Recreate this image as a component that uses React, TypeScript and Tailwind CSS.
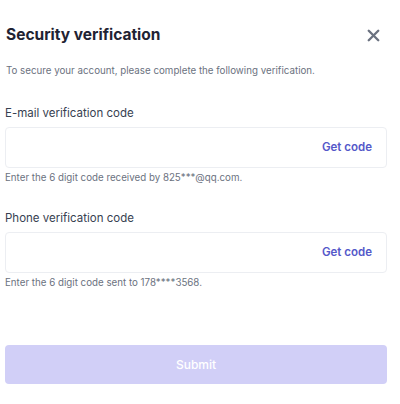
import { X } from 'lucide-react';

interface CodeFieldProps {
  label: string;
  hint: string;
}

function CodeField({ label, hint }: CodeFieldProps) {
  return (
    <div>
      <label className="block text-[11.5px] leading-4 text-[#374151] h-4">{label}</label>
      <div className="mt-[6px] h-[41px] rounded-[4px] border border-[#eceef2] flex items-center justify-end pr-[14px]">
        <button className="text-[11.5px] font-semibold text-[#5458c9]">Get code</button>
      </div>
      <p className="mt-[3px] text-[9.75px] leading-[14px] text-[#6b7280]">{hint}</p>
    </div>
  );
}

export default function App() {
  return (
    <div className="w-[400px] h-[404px] bg-white pl-[5px] pt-[23px] font-['Inter',sans-serif]">
      <div className="w-[382px]">
        <div className="flex items-center justify-between pl-[1px]">
          <h2 className="text-[15.5px] leading-6 font-bold text-[#1f2333]">Security verification</h2>
          <button className="mr-[4px] text-[#6b7280]">
            <X className="h-[19px] w-[19px]" strokeWidth={3} />
          </button>
        </div>
        <p className="mt-[17px] pl-[1px] text-[9.75px] leading-[14px] text-[#6b7280]">
          To secure your account, please complete the following verification.
        </p>
        <div className="mt-[27px]">
          <CodeField label="E-mail verification code" hint="Enter the 6 digit code received by 825***@qq.com." />
        </div>
        <div className="mt-[25px]">
          <CodeField label="Phone verification code" hint="Enter the 6 digit code sent to 178****3568." />
        </div>
        <button className="mt-[55px] w-full h-[39px] rounded-[4px] bg-[#d1cff7] text-white text-[12px] font-medium">
          Submit
        </button>
      </div>
    </div>
  );
}
